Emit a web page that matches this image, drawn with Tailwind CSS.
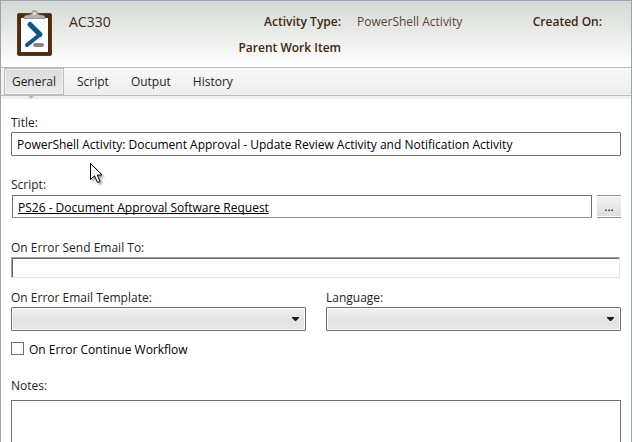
<!DOCTYPE html>
<html lang="en">
<head>
    <meta charset="UTF-8">
    <meta name="viewport" content="width=device-width, initial-scale=1.0">
    <title>AC330 - PowerShell Activity</title>
    <script src="https://cdn.jsdelivr.net/npm/@tailwindcss/browser@4"></script>
</head>
<body class="bg-white text-[#1e1e1e] text-xs leading-4 font-['Open_Sans','Noto_Sans',sans-serif]">
    <div class="relative h-screen overflow-hidden flex flex-col border border-b-0 border-[#9ba3b0]">
        <!-- Header -->
        <header class="flex h-[66px] shrink-0 bg-linear-to-b from-[#d5d9d5] to-white text-[#402810]">
            <svg class="ml-4 mt-2 w-9 h-12 shrink-0" viewBox="0 0 36 48" aria-hidden="true">
                <rect x="0.5" y="4.5" width="34" height="42" rx="1.5" fill="#4f2b12" stroke="#5b3a20"/>
                <rect x="4" y="9" width="27" height="34" fill="#fff"/>
                <path d="M7 9.500V8Q7.500 6 11.500 6L14 5.500Q14.500 1.500 17.500 1.500T21 5.500L23.500 6Q27.500 6 28 8V9.500Z" fill="#b4b4b4" stroke="#858585" stroke-width="0.800"/>
                <circle cx="17.500" cy="4.500" r="1.300" fill="#eee"/>
                <path d="M13 15.500 23 25.500" fill="none" stroke="#0f5585" stroke-width="5" stroke-linecap="round"/>
                <path d="M23 25.500 10 36" fill="none" stroke="#0f5585" stroke-width="4" stroke-linecap="round"/>
                <rect x="16" y="34" width="11" height="4" rx="2" fill="#858585"/>
            </svg>
            <h1 class="ml-4 mt-[11px] w-[128px] text-sm leading-5">AC330</h1>
            <dl class="mt-[11px] flex-1 grid grid-cols-[144px_1fr_auto] auto-rows-[20px] gap-x-4 gap-y-[6px] pr-[29px] leading-5">
                <dt class="font-semibold text-right">Activity Type:</dt>
                <dd class="text-[#5a4634]">PowerShell Activity</dd>
                <dt class="font-semibold">Created On:</dt>
                <dt class="font-semibold text-right">Parent Work Item</dt>
            </dl>
        </header>

        <!-- Tabs -->
        <nav class="relative flex h-[29px] shrink-0 pl-[3px] border-y border-[#b9bdbd] bg-linear-to-b from-[#f8f8f8] to-[#eeeeee]">
            <button type="button" class="w-[60px] border border-[#bcbcbc] bg-linear-to-b from-[#dcdcdc] to-[#ebebeb] shadow-[inset_0_0_0_1px_#f4f4f4]">General</button>
            <button type="button" class="ml-[13px]">Script</button>
            <button type="button" class="ml-[22px]">Output</button>
            <button type="button" class="ml-[22px]">History</button>
            <svg class="absolute left-[26px] top-[27px] w-2 h-1 z-10" viewBox="0 0 8 4" aria-hidden="true"><path d="M0 0H8L4 4Z" fill="#b9bdbd"/></svg>
        </nav>
        <div class="h-[3px] shrink-0 bg-[#f0f0f0]"></div>

        <!-- General tab -->
        <form class="flex-1 flex flex-col px-[10px] pt-4">
            <label for="title">Title:</label>
            <input id="title" type="text" value="PowerShell Activity: Document Approval - Update Review Activity and Notification Activity"
                class="mt-px w-full h-6 px-[5px] border border-[#6f6f6f] rounded-[1px] text-black outline-none">

            <span id="script-label" class="mt-[21px]">Script:</span>
            <div class="mt-[2px] flex gap-[5px]">
                <div class="ml-px flex-1 h-[23px] px-[5px] pt-[4px] border border-[#6f6f6f] border-b-[#8f8f8f] rounded-[1px]">
                    <a id="script-link" href="#" aria-labelledby="script-label script-link" class="block w-max leading-4 text-black underline underline-offset-1 [text-decoration-skip-ink:none]">PS26 - Document Approval Software Request</a>
                </div>
                <button type="button" aria-label="Browse" class="w-6 h-[23px] border-y border-[#8f8f8f] bg-linear-to-b from-[#f3f3f3] to-[#dddddd] shadow-[inset_0_1px_0_#fff,inset_0_-1px_0_#fff] text-black">...</button>
            </div>

            <label for="email" class="mt-[22px]">On Error Send Email To:</label>
            <input id="email" type="text" class="mt-px mr-px h-[21px] px-1 border border-t-[#a0a0a0] border-l-[#a0a0a0] border-r-[#e3e3e3] border-b-[#e3e3e3] shadow-[inset_1px_1px_0_#696969] outline-none">

            <div class="mt-3 grid grid-cols-2 gap-5">
                <div>
                    <label for="template" class="block">On Error Email Template:</label>
                    <div class="relative mt-px">
                        <select id="template" class="block appearance-none w-full h-6 border border-[#707070] rounded-[1px] bg-linear-to-b from-[#f2f2f2] via-[#e2e2e2] to-[#e8e8e8] shadow-[inset_0_0_0_1px_#fafafa] outline-none"><option></option></select>
                        <svg class="absolute right-[7px] top-[10px] w-[7px] h-1 pointer-events-none" viewBox="0 0 7 4" aria-hidden="true"><path d="M0 0H7V1L4 4H3L0 1Z" fill="#1e1e1e"/></svg>
                    </div>
                </div>
                <div>
                    <label for="language" class="block">Language:</label>
                    <div class="relative mt-px">
                        <select id="language" class="block appearance-none w-full h-6 border border-[#707070] rounded-[1px] bg-linear-to-b from-[#f2f2f2] via-[#e2e2e2] to-[#e8e8e8] shadow-[inset_0_0_0_1px_#fafafa] outline-none"><option></option></select>
                        <svg class="absolute right-[7px] top-[10px] w-[7px] h-1 pointer-events-none" viewBox="0 0 7 4" aria-hidden="true"><path d="M0 0H7V1L4 4H3L0 1Z" fill="#1e1e1e"/></svg>
                    </div>
                </div>
            </div>

            <div class="mt-[11px] flex items-start gap-[5px]">
                <input id="continue" type="checkbox" class="appearance-none size-[13px] border border-[#707070] bg-white checked:bg-[#0f5585]">
                <label for="continue" class="text-black">On Error Continue Workflow</label>
            </div>

            <label for="notes" class="mt-5">Notes:</label>
            <textarea id="notes" class="mt-[6px] flex-1 w-full p-1 border border-b-0 border-[#6f6f6f] rounded-t-[1px] resize-none outline-none"></textarea>
        </form>

        <!-- Mouse pointer -->
        <svg class="absolute left-[89px] top-[162px] w-4 h-6 pointer-events-none drop-shadow-[2px_2px_1px_rgba(0,0,0,0.35)]" viewBox="0 0 16 24" aria-hidden="true">
            <path d="M0.500 0.500V16.500L4.500 12.800L7.500 19.500L10 18.500L7.300 12H12Z" fill="#fff" stroke="#000"/>
        </svg>
    </div>
</body>
</html>
